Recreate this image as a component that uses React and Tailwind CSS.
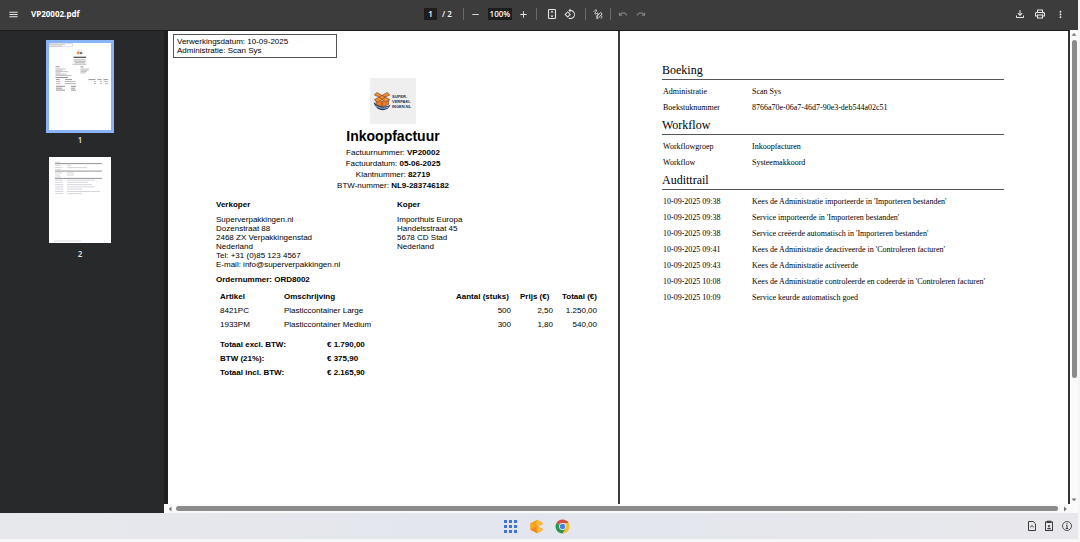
import {
  MdMenu,
  MdRemove,
  MdAdd,
  MdRotate90DegreesCcw,
  MdUndo,
  MdRedo,
  MdOutlineFileDownload,
  MdOutlinePrint,
  MdMoreVert,
} from "react-icons/md";

const lines = [
  { article: "8421PC", description: "Plasticcontainer Large", amount: "500", price: "2,50", total: "1.250,00" },
  { article: "1933PM", description: "Plasticcontainer Medium", amount: "300", price: "1,80", total: "540,00" },
];

const totals = [
  ["Totaal excl. BTW:", "€ 1.790,00"],
  ["BTW (21%):", "€ 375,90"],
  ["Totaal incl. BTW:", "€ 2.165,90"],
];

const sections = [
  {
    title: "Boeking",
    rows: [
      ["Administratie", "Scan Sys"],
      ["Boekstuknummer", "8766a70e-06a7-46d7-90e3-deb544a02c51"],
    ],
  },
  {
    title: "Workflow",
    rows: [
      ["Workflowgroep", "Inkoopfacturen"],
      ["Workflow", "Systeemakkoord"],
    ],
  },
  {
    title: "Audittrail",
    rows: [
      ["10-09-2025 09:38", "Kees de Administratie importeerde in 'Importeren bestanden'"],
      ["10-09-2025 09:38", "Service importeerde in 'Importeren bestanden'"],
      ["10-09-2025 09:38", "Service creëerde automatisch in 'Importeren bestanden'"],
      ["10-09-2025 09:41", "Kees de Administratie deactiveerde in 'Controleren facturen'"],
      ["10-09-2025 09:43", "Kees de Administratie activeerde"],
      ["10-09-2025 10:08", "Kees de Administratie controleerde en codeerde in 'Controleren facturen'"],
      ["10-09-2025 10:09", "Service keurde automatisch goed"],
    ],
  },
];

function IconButton({ label, children, dim }) {
  return (
    <button
      type="button"
      aria-label={label}
      className={`flex size-3 shrink-0 items-center justify-center ${dim ? "text-[#808080]" : "text-[#e6e6e6]"}`}
    >
      {children}
    </button>
  );
}

function Divider() {
  return <span className="h-3 w-px shrink-0 bg-[#6a6a6a]" />;
}

function FitPageIcon() {
  return (
    <svg viewBox="0 0 12 12" className="size-3" fill="none" stroke="currentColor" strokeWidth="1.1">
      <rect x="2.5" y="1.5" width="7" height="9" rx="0.8" />
      <path d="M6 2.6 7.6 4.6H4.4ZM6 9.4 7.6 7.4H4.4Z" fill="currentColor" stroke="none" />
    </svg>
  );
}

function InkIcon() {
  return (
    <svg viewBox="0 0 12 12" className="size-3" fill="none" stroke="currentColor" strokeWidth="0.9" strokeLinecap="round" strokeLinejoin="round">
      <path d="M2 3.4C3.400 1.600 4.800 1.400 4.600 2.600S2.200 5.400 3 6 5.400 4.400 6 5 4.400 7.600 4.800 8.800" />
      <path d="M4.800 10.200 5.200 8.200 8.600 4.400 10.200 5.800 6.800 9.600ZM9.600 8c1 .6.600 1.600-.6 2.400" />
    </svg>
  );
}

function Toolbar() {
  return (
    <header className="flex h-[30px] shrink-0 items-center bg-[#3c3c3c] pb-0.5 font-['Open_Sans',sans-serif] text-[8px] text-white">
      <div className="flex flex-1 items-center gap-3 pl-[7px]">
        <IconButton label="Menu"><MdMenu size={11} /></IconButton>
        <h1 className="font-bold">VP20002.pdf</h1>
      </div>
      <div className="flex items-center gap-1.5 pr-0.5">
        <div className="flex items-center gap-[5px] pr-[5px]">
          <input aria-label="Pagina" defaultValue="1" className="h-3 w-[13px] bg-[#1d1d1d] text-center font-semibold" />
          <span className="font-semibold">/ 2</span>
        </div>
        <Divider />
        <IconButton label="Uitzoomen"><MdRemove size={11} /></IconButton>
        <input aria-label="Zoomniveau" defaultValue="100%" className="h-3 w-6 bg-[#1d1d1d] text-center font-semibold" />
        <IconButton label="Inzoomen"><MdAdd size={11} /></IconButton>
        <Divider />
        <div className="flex gap-1.5 px-[3px]">
          <IconButton label="Aanpassen aan pagina"><FitPageIcon /></IconButton>
          <IconButton label="Linksom draaien"><MdRotate90DegreesCcw size={12} /></IconButton>
        </div>
        <Divider />
        <IconButton label="Tekenen"><InkIcon /></IconButton>
        <Divider />
        <IconButton label="Ongedaan maken" dim><MdUndo size={10} /></IconButton>
        <IconButton label="Opnieuw" dim><MdRedo size={10} /></IconButton>
      </div>
      <div className="flex flex-1 items-center justify-end gap-2 pr-3">
        <IconButton label="Downloaden"><MdOutlineFileDownload size={12} /></IconButton>
        <IconButton label="Afdrukken"><MdOutlinePrint size={12} /></IconButton>
        <IconButton label="Meer"><MdMoreVert size={11} /></IconButton>
      </div>
    </header>
  );
}

function InvoiceThumb() {
  return (
    <svg viewBox="0 0 62 87" className="block w-full bg-white" stroke="#999" strokeWidth="0.7">
      <rect x="0.5" y="0.5" width="23" height="3.4" fill="none" strokeWidth="0.3" />
      <path d="M1 1.6h15M1 3h12" strokeWidth="0.5" />
      <rect x="27.5" y="6.5" width="6" height="6" fill="#eee" stroke="none" />
      <path d="M28 9.8h2.5" stroke="#ef7d31" strokeWidth="2" />
      <path d="M31 10h2.2" stroke="#34445c" strokeWidth="1.4" />
      <path d="M24.5 14.3h12.5" stroke="#444" strokeWidth="1.2" />
      <path d="M24.5 16.8h12M25 18.3h12M26 19.7h10M23.5 21.2h14" />
      <path d="M6.5 23.8h4M31.5 23.8h3" stroke="#666" />
      <path d="M6.5 26h10M6.5 27.3h7M6.5 28.6h12.5M6.5 29.9h5M6.5 31.2h11M6.5 32.5h16M31.5 26h8.5M31.5 27.3h8M31.5 28.6h6.5M31.5 29.9h5" strokeWidth="0.6" />
      <path d="M6.5 34.5h12.5M7 36.6h3.5M16 36.6h7M39.5 36.6h7M48.5 36.6h4M54.5 36.6h4.5" stroke="#666" />
      <path d="M7 38.6h4M16 38.6h10.5M45 38.6h2M51 38.6h2M55 38.6h4M7 40.6h4M16 40.6h11M45 40.6h2M51 40.6h2M56 40.6h3" />
      <path d="M7 43.3h9M22 43.3h5M7 45.2h6M22 45.2h4M7 47.1h9M22 47.1h5" stroke="#666" />
    </svg>
  );
}

function AuditThumb() {
  return (
    <svg viewBox="0 0 62 86" className="block w-full bg-white" stroke="#bbb" strokeWidth="0.6">
      <path d="M6 6.6h47M6 14.1h47M6 21.4h47" stroke="#888" strokeWidth="0.9" />
      <path d="M6 5.2h5M6 12.7h6M6 20h6" />
      <path d="M6 8.4h6M18 8.4h4M6 10.6h7M18 10.6h20M6 15.8h7M18 15.8h7M6 18h5M18 18h7" />
      <path d="M6 23.2h8M18 23.2h28M6 25.4h8M18 25.4h21M6 27.6h8M18 27.6h25M6 29.8h8M18 29.8h28M6 32h8M18 32h15M6 34.5h8M18 34.5h33M6 36.6h8M18 36.6h15" stroke="#bbbbc8" />
      <path d="M5 84h27M55 84h1" strokeWidth="0.5" />
    </svg>
  );
}

function Sidebar() {
  return (
    <nav aria-label="Miniaturen" className="flex w-[164px] shrink-0 flex-col items-center bg-[#28292a] pt-[9px] pr-1 font-['Open_Sans',sans-serif] text-[8px] leading-[14px] font-semibold text-[#e3e3e3]">
      <button type="button" className="flex flex-col items-center">
        <span className="w-[68px] border-3 border-[#8ab4f8]"><InvoiceThumb /></span>
        <span>1</span>
      </button>
      <button type="button" className="mt-2.5 flex flex-col items-center gap-1">
        <span className="w-[62px]"><AuditThumb /></span>
        <span>2</span>
      </button>
    </nav>
  );
}

function CompanyLogo() {
  return (
    <div className="flex size-[46px] items-center gap-px bg-[#efefef] pl-[3px]">
      <svg viewBox="0 0 18 20" className="h-5 w-[18px] shrink-0" aria-hidden="true">
        <path d="M.6 11c1 5 5 8.2 9 8.2 3.600 0 6.800-2 7.800-5.400-5 2.600-11.800 2.200-16.800-2.800Z" fill="#173e6b" />
        <path d="M2.5 14.6c3.200 2.400 8.500 3.600 13 1.400" fill="none" stroke="#efefef" strokeWidth="0.7" />
        <path d="M3 8 9 10.400 15.500 8v5.400L9 16 3 13.400Z" fill="#ee7d24" stroke="#4b2f26" strokeWidth="0.5" />
        <path d="M9 10.400V16" stroke="#4b2f26" strokeWidth="0.6" />
        <path d="M9 4.400 3.800 1.400 1.300 4 6 6 1.300 8.700 5 11.200 9 8.500 13 11.200 16.900 8.700 12.200 6 16.900 4 14.200 1.400Z" fill="#f58b2a" stroke="#4b2f26" strokeWidth="0.5" strokeLinejoin="round" />
        <path d="M6 6 9 4.400 12.200 6 9 8.500Z" fill="#f58b2a" stroke="#4b2f26" strokeWidth="0.5" />
      </svg>
      <span className="text-left text-[4px] leading-[5px] font-bold text-[#1b2f4b]">
        SUPER-<br />VERPAKI-<br />INGEN.NL
      </span>
    </div>
  );
}

function InvoicePage() {
  return (
    <article className="min-w-0 bg-white pt-[3px] font-['Liberation_Sans',sans-serif] text-[8px] leading-[9px] text-black">
      <p className="ml-[5px] h-6 w-[164px] border border-[#555] px-[3px] pt-0.5">
        Verwerkingsdatum: 10-09-2025<br />Administratie: Scan Sys
      </p>
      <div className="mt-5 flex flex-col items-center text-center">
        <CompanyLogo />
        <h2 className="mt-[3px] text-[14px] leading-[18px] font-bold">Inkoopfactuur</h2>
        <div className="mt-0.5 leading-[11px]">
          <p>Factuurnummer: <b>VP20002</b></p>
          <p>Factuurdatum: <b>05-06-2025</b></p>
          <p>Klantnummer: <b>82719</b></p>
          <p>BTW-nummer: <b>NL9-283746182</b></p>
        </div>
      </div>
      <div className="mt-[9px] grid grid-cols-2 pr-10 pl-12">
        <section>
          <h3 className="mb-1.5 font-bold">Verkoper</h3>
          <p>
            Superverpakkingen.nl<br />Dozenstraat 88<br />2468 ZX Verpakkingenstad<br />Nederland<br />
            Tel: +31 (0)85 123 4567<br />E-mail: info@superverpakkingen.nl
          </p>
        </section>
        <section>
          <h3 className="mb-1.5 font-bold">Koper</h3>
          <p>Importhuis Europa<br />Handelsstraat 45<br />5678 CD Stad<br />Nederland</p>
        </section>
      </div>
      <p className="mt-1.5 ml-12 font-bold">Ordernummer: ORD8002</p>
      <div className="mt-1.5 pr-[21px] pl-[52px]">
        <table className="w-full table-fixed leading-[14px]">
          <thead>
            <tr className="text-left">
              <th className="w-16">Artikel</th>
              <th>Omschrijving</th>
              <th className="w-[55px] whitespace-nowrap">Aantal (stuks)</th>
              <th className="w-[42px] pl-[9px] whitespace-nowrap">Prijs (€)</th>
              <th className="w-11 pl-[9px] whitespace-nowrap">Totaal (€)</th>
            </tr>
          </thead>
          <tbody>
            {lines.map((line) => (
              <tr key={line.article}>
                <td>{line.article}</td>
                <td>{line.description}</td>
                <td className="text-right">{line.amount}</td>
                <td className="text-right">{line.price}</td>
                <td className="text-right">{line.total}</td>
              </tr>
            ))}
          </tbody>
        </table>
        <table className="mt-1.5 leading-[14px] font-bold">
          <tbody>
            {totals.map(([label, value]) => (
              <tr key={label}>
                <th scope="row" className="w-[107px] text-left">{label}</th>
                <td>{value}</td>
              </tr>
            ))}
          </tbody>
        </table>
      </div>
    </article>
  );
}

function AuditPage() {
  return (
    <article className="min-w-0 border-l-2 border-[#3c3c3c] bg-white pt-[31px] pr-16 pl-[42px] font-['Liberation_Serif',serif] text-[8px] leading-4 text-black">
      {sections.map((section) => (
        <section key={section.title} className="pb-px">
          <h2 className="mb-1 border-b border-[#555] text-[12px] leading-[17px]">{section.title}</h2>
          <table className="w-full">
            <tbody>
              {section.rows.map(([label, value]) => (
                <tr key={label + value}>
                  <th scope="row" className="w-[90px] pl-px text-left font-normal whitespace-nowrap">{label}</th>
                  <td className="whitespace-nowrap">{value}</td>
                </tr>
              ))}
            </tbody>
          </table>
        </section>
      ))}
    </article>
  );
}

function Arrow({ d }) {
  return (
    <svg viewBox="0 0 8 8" className="size-2 shrink-0" fill="#777" aria-hidden="true">
      <path d={d} />
    </svg>
  );
}

function Taskbar() {
  return (
    <footer className="flex h-[26px] shrink-0 items-center bg-linear-to-r from-[#e7e8ec] via-[#e3e6ee] to-[#e8e8ec]">
      <div className="flex-1" />
      <div className="flex items-center gap-[11px]">
        <button type="button" aria-label="Apps">
          <svg viewBox="0 0 15 15" className="size-[15px]" fill="#3d73dc">
            <path d="M1 1h3v3H1zM6 1h3v3H6zM11 1h3v3h-3zM1 6h3v3H1zM6 6h3v3H6zM11 6h3v3h-3zM1 11h3v3H1zM6 11h3v3H6zM11 11h3v3h-3z" />
          </svg>
        </button>
        <button type="button" aria-label="Scan Sys">
          <svg viewBox="0 0 15 15" className="size-[15px]">
            <path d="M8 .8 1.500 4.200v6.600L8 14.200l5.500-3V9.800L9 7.500l4.500-2.300V3.800Z" fill="#f6a01e" />
            <path d="M8 .8 13.500 3.800v1.400L9 7.500 7 4.600Z" fill="#fbb83a" />
            <path d="M1.500 4.200 7 7.500 1.500 10.800Z" fill="#f9a727" />
            <path d="M1.500 10.800 7 7.500 8 14.200Z" fill="#f18a1b" />
            <path d="M8 14.200 13.500 11.200V9.800L9 7.500Z" fill="#fbb83a" />
          </svg>
        </button>
        <button type="button" aria-label="Chrome">
          <svg viewBox="0 0 15 15" className="size-[15px]">
            <path d="M7.500 7.500 1.440 4A7 7 0 0 1 13.560 4Z" fill="#d3503e" />
            <path d="M7.500 7.500 13.560 4A7 7 0 0 1 7.500 14.500Z" fill="#f5bd30" />
            <path d="M7.500 7.500V14.500A7 7 0 0 1 1.440 4Z" fill="#2b9650" />
            <path d="M7.500 4H13.560L10.530 9.250Z" fill="#f5bd30" />
            <path d="M10.530 9.250 7.500 14.500 5.500 10Z" fill="#2b9650" />
            <path d="M7.500 4H13.560L12 2.200 7.500 3Z" fill="#d3503e" />
            <circle cx="7.500" cy="7.500" r="3.400" fill="#fff" />
            <circle cx="7.500" cy="7.500" r="2.700" fill="#4a7fe0" />
          </svg>
        </button>
      </div>
      <div className="flex flex-1 items-center justify-end gap-[7px] pr-[5px] text-[#3d3d3d]">
        <button type="button" aria-label="Document">
          <svg viewBox="0 0 10 12" className="h-3 w-2.5" fill="none" stroke="currentColor">
            <path d="M1.500 1.500h4.700L8.500 3.800v6.700h-7Z" strokeLinejoin="round" />
            <path d="M3.200 7.200 5 5.600 6.800 7.200" />
          </svg>
        </button>
        <button type="button" aria-label="Klembord">
          <svg viewBox="0 0 10 12" className="h-3 w-2.5" fill="none" stroke="currentColor">
            <rect x="1.500" y="2" width="7" height="8.500" />
            <path d="M3 1.200h4v1.300H3z" fill="currentColor" />
            <path d="M2.900 9.200C3.200 7.200 6.800 7.200 7.100 9.200Z" fill="currentColor" stroke="none" />
            <circle cx="5" cy="6" r="1.100" fill="currentColor" stroke="none" />
          </svg>
        </button>
        <button type="button" aria-label="Informatie">
          <svg viewBox="0 0 12 12" className="size-3" fill="none" stroke="currentColor">
            <circle cx="6" cy="6" r="4.500" strokeWidth="0.900" />
            <path d="M6 5.300v3.200M5 5.400h1M4.800 8.500h2.400M6 3v1.200" />
          </svg>
        </button>
      </div>
    </footer>
  );
}

export default function App() {
  return (
    <div className="flex h-screen flex-col overflow-hidden bg-[#f6f6f6] pr-0.5 pb-[3px]">
      <Toolbar />
      <main className="flex min-h-0 flex-1">
        <div className="flex border-t border-[#1c1c1c]"><Sidebar /></div>
        <div className="flex min-w-0 flex-1 flex-col">
          <div className="flex min-h-0 flex-1">
            <div className="grid min-w-0 flex-1 grid-cols-2 overflow-hidden border-t border-r-2 border-l-4 border-t-[#1c1c1c] border-r-[#333] border-l-[#1f1f1f]">
              <InvoicePage />
              <AuditPage />
            </div>
            <div className="flex w-2 shrink-0 flex-col items-center bg-[#fafafa]">
              <Arrow d="M1.500 5.800 4 3l2.500 2.800Z" />
              <div className="mt-0.5 h-[338px] w-[5px] rounded-full bg-[#8b8b8b]" />
              <div className="flex-1" />
              <Arrow d="M1.500 2.500 4 5.300l2.500-2.800Z" />
            </div>
          </div>
          <div className="flex h-[9px] shrink-0 items-center gap-0.5 bg-[#fafafa] pr-[10px] pl-0.5">
            <Arrow d="M5.500 1.500 2.700 4l2.800 2.500Z" />
            <div className="h-[5px] flex-1 rounded-full bg-[#8b8b8b]" />
            <Arrow d="M4 1.500 6.800 4 4 6.500Z" />
          </div>
        </div>
      </main>
      <Taskbar />
    </div>
  );
}
